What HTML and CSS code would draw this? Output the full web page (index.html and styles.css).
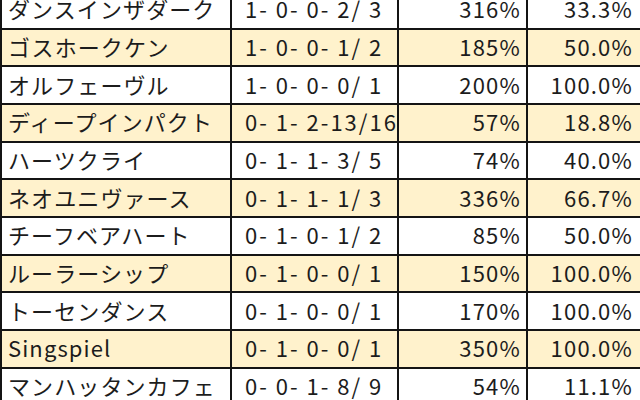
FILE: index.html
```html
<!DOCTYPE html>
<html lang="ja">
<head>
<meta charset="utf-8">
<link rel="stylesheet" href="styles.css">
</head>
<body>
<div class="sheet">
  <div class="row"><div class="c name">ダンスインザダーク</div><div class="c rec">1- 0- 0- 2/ 3</div><div class="c num">316%</div><div class="c num last">33.3%</div></div>
  <div class="row alt"><div class="c name">ゴスホークケン</div><div class="c rec">1- 0- 0- 1/ 2</div><div class="c num">185%</div><div class="c num last">50.0%</div></div>
  <div class="row"><div class="c name">オルフェーヴル</div><div class="c rec">1- 0- 0- 0/ 1</div><div class="c num">200%</div><div class="c num last">100.0%</div></div>
  <div class="row alt"><div class="c name">ディープインパクト</div><div class="c rec">0- 1- 2-13/16</div><div class="c num">57%</div><div class="c num last">18.8%</div></div>
  <div class="row"><div class="c name">ハーツクライ</div><div class="c rec">0- 1- 1- 3/ 5</div><div class="c num">74%</div><div class="c num last">40.0%</div></div>
  <div class="row alt"><div class="c name">ネオユニヴァース</div><div class="c rec">0- 1- 1- 1/ 3</div><div class="c num">336%</div><div class="c num last">66.7%</div></div>
  <div class="row"><div class="c name">チーフベアハート</div><div class="c rec">0- 1- 0- 1/ 2</div><div class="c num">85%</div><div class="c num last">50.0%</div></div>
  <div class="row alt"><div class="c name">ルーラーシップ</div><div class="c rec">0- 1- 0- 0/ 1</div><div class="c num">150%</div><div class="c num last">100.0%</div></div>
  <div class="row"><div class="c name">トーセンダンス</div><div class="c rec">0- 1- 0- 0/ 1</div><div class="c num">170%</div><div class="c num last">100.0%</div></div>
  <div class="row alt"><div class="c name">Singspiel</div><div class="c rec">0- 1- 0- 0/ 1</div><div class="c num">350%</div><div class="c num last">100.0%</div></div>
  <div class="row"><div class="c name">マンハッタンカフェ</div><div class="c rec">0- 0- 1- 8/ 9</div><div class="c num">54%</div><div class="c num last">11.1%</div></div>
</div>
</body>
</html>
```
FILE: styles.css
```css
html, body {
  margin: 0;
  padding: 0;
  background: #ffffff;
  overflow: hidden;
}
body {
  width: 640px;
  height: 400px;
  font-family: "Noto Sans CJK JP", "Noto Sans", sans-serif;
  font-size: 22px;
  color: #1c1c1c;
}
.sheet {
  display: flex;
  flex-direction: column;
  gap: 2px;
  padding: 2px;
  width: 643px;
  box-sizing: border-box;
  margin-top: -10px;
  background: #141414;
}
.row {
  display: grid;
  grid-template-columns: 228px 165px 127px 113px;
  column-gap: 2px;
  height: 35.67px;
}
.c {
  background: #ffffff;
  display: flex;
  align-items: center;
  white-space: pre;
  line-height: 1;
  padding-bottom: 3px;
  box-sizing: border-box;
}
.row.alt .c {
  background: #fff2cc;
}
.name {
  padding-left: 6px;
  letter-spacing: 1.1px;
}
.rec {
  padding-left: 13px;
  letter-spacing: 2px;
}
.num {
  justify-content: flex-end;
  padding-right: 5px;
  letter-spacing: 1.2px;
}
.num.last {
  padding-right: 8px;
}
```
